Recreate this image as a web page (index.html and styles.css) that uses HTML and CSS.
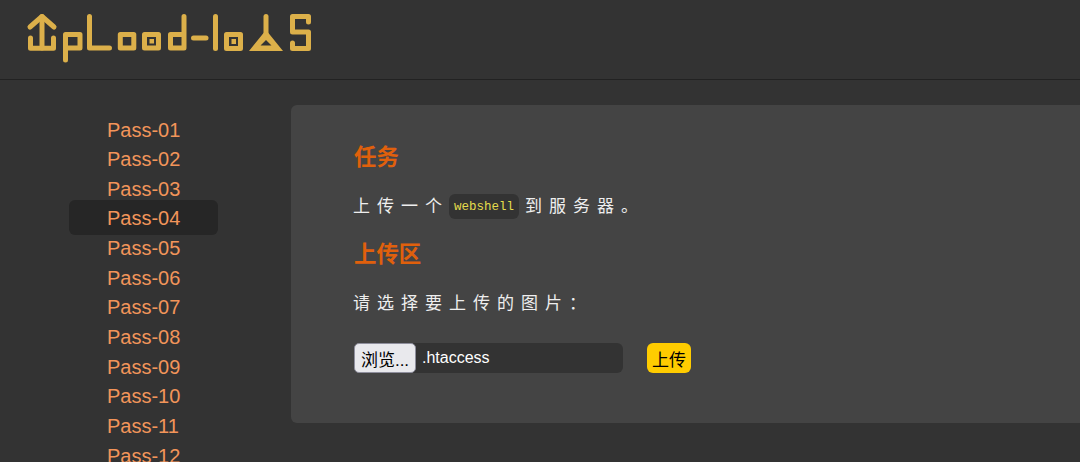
FILE: index.html
```html
<!DOCTYPE html>
<html lang="en">
  <head>
    <meta charset="UTF-8" />
    <title>upload-labs</title>
    <link rel="stylesheet" href="styles.css">
  </head>
  <body>
    <header class="head">
      <a class="logo" href="#" aria-label="upload-labs">
        <svg width="300" height="60" viewBox="20 8 300 60" fill="none" stroke="#dcb04a" stroke-width="5" stroke-linejoin="round" stroke-linecap="round">
          <!-- arrow u -->
          <path d="M30 27 L42 16.5 L54 27" />
          <path d="M42 16.5 V48" />
          <path d="M30.5 38 V48.3 H53.5 V38" />
          <!-- p -->
          <path d="M65.5 60 V34.5 H80 V48 H65.5" />
          <!-- L -->
          <path d="M89.5 16.5 V48 H109.5" />
          <!-- o -->
          <rect x="120.3" y="34.5" width="13.5" height="13.5" />
          <!-- o with dot -->
          <rect x="144.5" y="34.5" width="14" height="13.5" />
          <rect class="dot" x="149.5" y="39" width="4.5" height="4.5" />
          <!-- d -->
          <path d="M184 16.5 V48 H170.5 V34.5 H184" />
          <!-- dash -->
          <path d="M193.5 38 H206" />
          <!-- l -->
          <path d="M215.5 16.5 V48.5" />
          <!-- o with dot -->
          <rect x="226.5" y="34.5" width="14" height="14" />
          <rect class="dot" x="231.5" y="39" width="4.5" height="5" />
          <!-- a -->
          <path d="M266 16.5 V34" />
          <path class="dot" fill-rule="evenodd" d="M266 30 L283 51 H249 Z M266 40 L260.5 45.5 H271.5 Z" />
          <!-- s -->
          <path d="M308.5 22 V16.5 H292.5 V32 H308.5 V48.5 H292.5 V43" />
        </svg>
      </a>
    </header>
    <div class="wrap">
      <aside class="side">
        <ul class="menu">
          <li><a href="#">Pass-01</a></li>
          <li><a href="#">Pass-02</a></li>
          <li><a href="#">Pass-03</a></li>
          <li><a class="active" href="#">Pass-04</a></li>
          <li><a href="#">Pass-05</a></li>
          <li><a href="#">Pass-06</a></li>
          <li><a href="#">Pass-07</a></li>
          <li><a href="#">Pass-08</a></li>
          <li><a href="#">Pass-09</a></li>
          <li><a href="#">Pass-10</a></li>
          <li><a href="#">Pass-11</a></li>
          <li><a href="#">Pass-12</a></li>
        </ul>
      </aside>
      <main class="panel">
        <h2>任务</h2>
        <p>上传一个<code>webshell</code>到服务器。</p>
        <h2>上传区</h2>
        <p>请选择要上传的图片：</p>
        <form class="upload" onsubmit="return false">
          <div class="file">
            <button class="browse" type="button">浏览...</button>
            <span class="filename">.htaccess</span>
          </div>
          <button class="submit" type="submit">上传</button>
        </form>
      </main>
    </div>
  </body>
</html>
```

FILE: styles.css
```css
*,
*::before,
*::after {
  box-sizing: border-box;
}

html,
body {
  height: 100%;
  overflow: hidden;
}

body {
  margin: 0;
  background-color: #333;
  color: #eee;
  font-family: "Liberation Sans", "Noto Sans CJK SC", sans-serif;
  font-size: 16px;
}

.head {
  height: 80px;
  padding: 8px 20px;
  border-bottom: 1px solid #222;
}

.logo {
  display: block;
  width: 300px;
  height: 60px;
}

.logo svg {
  display: block;
}

.logo .dot {
  fill: #dcb04a;
  stroke: none;
}

.wrap {
  display: flex;
  align-items: flex-start;
}

.side {
  flex: 0 0 291px;
  padding-top: 35px;
  padding-left: 69px;
}

.menu {
  margin: 0;
  padding: 0;
  list-style: none;
}

.menu li {
  font-size: 20px;
  line-height: 29.66px;
}

.menu a {
  padding: 6.5px 38px;
  border-radius: 6px;
  color: #f2955a;
  text-decoration: none;
}

.menu a.active {
  background-color: #262626;
}

.panel {
  flex: 1;
  height: 318px;
  margin-top: 25px;
  margin-right: -20px;
  padding: 37px 63px;
  border-radius: 6px;
  background-color: #444;
}

h2 {
  margin: 0;
  color: #e0600c;
  font-size: 22.4px;
  line-height: 32px;
}

p {
  margin: 20px 0 20px -1px;
  font-size: 17px;
  line-height: 25px;
  letter-spacing: 7px;
}

code {
  margin-right: 6px;
  padding: 6px 5px 5px;
  border-radius: 6px;
  background-color: #333;
  color: #e5dc4c;
  font-family: "Liberation Mono", monospace;
  font-size: 12.5px;
  line-height: 1;
  letter-spacing: 0;
  vertical-align: 2px;
}

.upload {
  display: flex;
  align-items: center;
  gap: 24px;
  margin-top: 27px;
}

.file {
  display: flex;
  align-items: center;
  width: 269px;
  height: 30px;
  border-radius: 6px;
  background-color: #333;
}

.browse {
  width: 62px;
  height: 30px;
  margin-right: 6px;
  padding: 0;
  border: 1px solid #8f8f9d;
  border-radius: 5px;
  background-color: #e9e9ed;
  color: #000;
  font-family: inherit;
  font-size: 17px;
}

.filename {
  color: #fff;
}

.submit {
  width: 44px;
  height: 30px;
  padding: 0;
  border: 0;
  border-radius: 6px;
  background-color: #fc0;
  color: #000;
  font-family: inherit;
  font-size: 17px;
}
```
